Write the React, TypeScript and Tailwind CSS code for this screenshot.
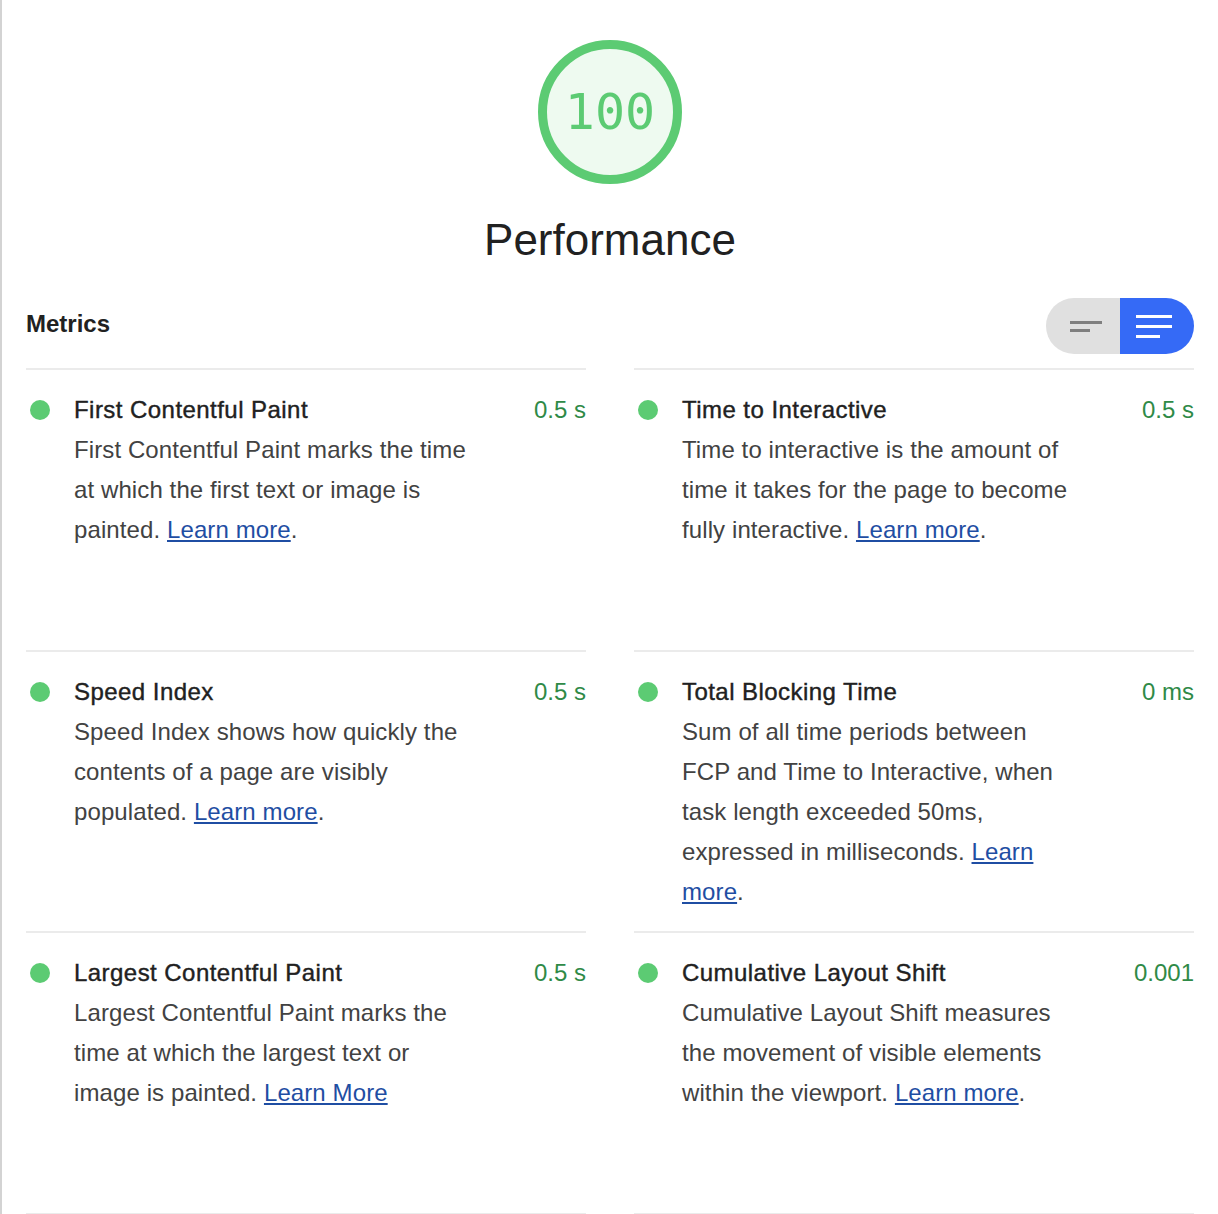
const metrics = [
  {
    title: "First Contentful Paint",
    value: "0.5 s",
    text: "First Contentful Paint marks the time at which the first text or image is painted.",
    link: "Learn more",
    dot: true,
  },
  {
    title: "Time to Interactive",
    value: "0.5 s",
    text: "Time to interactive is the amount of time it takes for the page to become fully interactive.",
    link: "Learn more",
    dot: true,
  },
  {
    title: "Speed Index",
    value: "0.5 s",
    text: "Speed Index shows how quickly the contents of a page are visibly populated.",
    link: "Learn more",
    dot: true,
  },
  {
    title: "Total Blocking Time",
    value: "0 ms",
    text: "Sum of all time periods between FCP and Time to Interactive, when task length exceeded 50ms, expressed in milliseconds.",
    link: "Learn more",
    dot: true,
  },
  {
    title: "Largest Contentful Paint",
    value: "0.5 s",
    text: "Largest Contentful Paint marks the time at which the largest text or image is painted.",
    link: "Learn More",
    dot: false,
  },
  {
    title: "Cumulative Layout Shift",
    value: "0.001",
    text: "Cumulative Layout Shift measures the movement of visible elements within the viewport.",
    link: "Learn more",
    dot: true,
  },
];

function Gauge() {
  return (
    <div className="flex h-[144px] w-[144px] items-center justify-center rounded-full border-[9px] border-[#5ccb73] bg-[#eefaf0]">
      <span className="font-['DejaVu_Sans_Mono',monospace] text-[50px] leading-none text-[#5ccb73]">
        100
      </span>
    </div>
  );
}

function ViewToggle() {
  return (
    <div className="flex h-[56px]">
      <button
        type="button"
        className="flex w-[74px] items-center justify-center rounded-l-full bg-[#e0e0e0] pl-[6px]"
      >
        <svg width="32" height="11" viewBox="0 0 32 11">
          <rect x="0" y="0" width="32" height="3" fill="#7f7f7f" />
          <rect x="0" y="8" width="20" height="3" fill="#7f7f7f" />
        </svg>
      </button>
      <button
        type="button"
        className="flex w-[74px] items-center justify-center rounded-r-full bg-[#356af6] pr-[6px]"
      >
        <svg width="36" height="23" viewBox="0 0 36 23">
          <rect x="0" y="0" width="36" height="3" fill="#fff" />
          <rect x="0" y="10" width="36" height="3" fill="#fff" />
          <rect x="0" y="20" width="24" height="3" fill="#fff" />
        </svg>
      </button>
    </div>
  );
}

function MetricCell({ m }: { m: (typeof metrics)[number] }) {
  return (
    <div className="flex h-[281.5px] border-t-2 border-[#ebebeb] pt-5">
      <div className="w-12 shrink-0">
        <div className="ml-1 mt-[10px] h-5 w-5 rounded-full bg-[#5ccb73]" />
      </div>
      <div className="flex-1">
        <div className="flex items-start justify-between">
          <h3 className="text-[24px] leading-[40px] tracking-[0.45px] text-[#212121] [-webkit-text-stroke:0.4px_#212121]">
            {m.title}
          </h3>
          <span className="text-[24px] leading-[40px] text-[#2f8a47]">{m.value}</span>
        </div>
        <p className="w-[396px] text-[24px] leading-[40px] tracking-[0.1px] text-[#424242]">
          {m.text}{" "}
          <a href="#" className="text-[#1f4ea3] underline underline-offset-2">
            {m.link}
          </a>
          {m.dot ? "." : ""}
        </p>
      </div>
    </div>
  );
}

export default function App() {
  return (
    <div className="min-h-screen border-l-2 border-[#d3d3d3] bg-white px-6 font-['Liberation_Sans',Arial,sans-serif]">
      <div className="flex flex-col items-center pt-10">
        <Gauge />
        <h1 className="mt-[30px] text-[44px] leading-[52px] text-[#212121]">Performance</h1>
      </div>
      <div className="mb-[14px] mt-8 flex items-center justify-between">
        <h2 className="pb-1 text-[24px] font-bold text-[#212121]">Metrics</h2>
        <ViewToggle />
      </div>
      <div className="grid grid-cols-2 gap-x-12">
        {metrics.map((m) => (
          <MetricCell key={m.title} m={m} />
        ))}
        <div className="border-t-2 border-[#ebebeb]" />
        <div className="border-t-2 border-[#ebebeb]" />
      </div>
    </div>
  );
}
